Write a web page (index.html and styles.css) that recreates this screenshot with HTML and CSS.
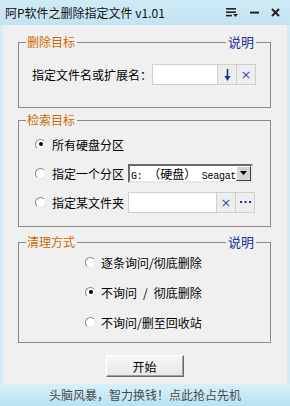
FILE: index.html
```html
<!DOCTYPE html>
<html lang="zh-CN">
<head>
  <meta charset="UTF-8">
  <title>阿P软件之删除指定文件 v1.01</title>
  <link rel="stylesheet" href="styles.css">
</head>
<body>
  <div class="window">
    <!-- 标题栏 -->
    <div class="titlebar">
      <span class="title">阿P软件之删除指定文件 v1.01</span>
      <div class="title-btns">
        <svg class="tb-icon" width="12" height="9" viewBox="0 0 12 9">
          <rect x="0" y="0" width="10" height="1.6" fill="#222"/>
          <rect x="0" y="3.4" width="10" height="1.6" fill="#222"/>
          <rect x="0" y="6.8" width="6" height="1.6" fill="#222"/>
          <path d="M7 6 L12 6 L9.5 9 Z" fill="#222"/>
        </svg>
        <svg class="tb-icon" width="9" height="9" viewBox="0 0 9 9">
          <rect x="0" y="3.6" width="9" height="2" fill="#222"/>
        </svg>
        <svg class="tb-icon" width="9" height="9" viewBox="0 0 9 9">
          <path d="M1 1 L8 8 M8 1 L1 8" stroke="#222" stroke-width="2"/>
        </svg>
      </div>
    </div>

    <div class="content">
      <!-- 删除目标 -->
      <div class="group g1">
        <div class="group-head">
          <span class="seg-l"></span>
          <span class="legend">删除目标</span>
          <span class="fill"></span>
          <span class="help">说明</span>
          <span class="seg-r"></span>
        </div>
        <div class="group-body body1">
          <div class="row">
            <span class="label">指定文件名或扩展名：</span>
            <span class="input w66"></span>
            <span class="ibtn">
              <svg width="7" height="12" viewBox="0 0 7 12">
                <path d="M3.5 0 L3.5 9" stroke="#1c2f9c" stroke-width="1.6"/>
                <path d="M0.5 7 L6.5 7 L3.5 12 Z" fill="#1c2f9c"/>
              </svg>
            </span>
            <span class="ibtn">×</span>
          </div>
        </div>
      </div>

      <!-- 检索目标 -->
      <div class="group g2">
        <div class="group-head">
          <span class="seg-l"></span>
          <span class="legend">检索目标</span>
          <span class="fill"></span>
          <span class="seg-r"></span>
        </div>
        <div class="group-body body2">
          <div class="row r20">
            <span class="radio checked"></span>
            <span class="label">所有硬盘分区</span>
          </div>
          <div class="row r20">
            <span class="radio"></span>
            <span class="label">指定一个分区</span>
            <div class="combo">
              <span class="combo-text">G: <span class="cjk">（硬盘）</span> Seagat</span>
              <span class="combo-btn">
                <svg width="7" height="4" viewBox="0 0 7 4"><path d="M0 0 L7 0 L3.5 4 Z" fill="#000"/></svg>
              </span>
            </div>
          </div>
          <div class="row r21">
            <span class="radio"></span>
            <span class="label">指定某文件夹</span>
            <span class="input w89"></span>
            <span class="ibtn">×</span>
            <span class="ibtn">
              <svg width="11" height="3" viewBox="0 0 11 3">
                <rect x="0" y="0" width="2" height="2" fill="#1c2f9c"/>
                <rect x="4.5" y="0" width="2" height="2" fill="#1c2f9c"/>
                <rect x="9" y="0" width="2" height="2" fill="#1c2f9c"/>
              </svg>
            </span>
          </div>
        </div>
      </div>

      <!-- 清理方式 -->
      <div class="group g3">
        <div class="group-head">
          <span class="seg-l"></span>
          <span class="legend">清理方式</span>
          <span class="fill"></span>
          <span class="help">说明</span>
          <span class="seg-r"></span>
        </div>
        <div class="group-body body3">
          <div class="row r20">
            <span class="radio"></span>
            <span class="label">逐条询问/彻底删除</span>
          </div>
          <div class="row r20">
            <span class="radio checked"></span>
            <span class="label">不询问&ensp;/&ensp;彻底删除</span>
          </div>
          <div class="row r20">
            <span class="radio"></span>
            <span class="label">不询问/删至回收站</span>
          </div>
        </div>
      </div>

      <div class="actions">
        <button class="start-btn">开始</button>
      </div>
    </div>

    <div class="footer">头脑风暴，智力换钱！点此抢占先机</div>
  </div>
</body>
</html>
```

FILE: styles.css
```css
body {
  margin: 0;
  padding: 0;
  font-family: "Noto Sans CJK SC", "Liberation Sans", sans-serif;
  font-size: 12px;
  color: #000;
}

.window {
  width: 290px;
  height: 406px;
  box-sizing: border-box;
  display: flex;
  flex-direction: column;
  background-color: #f0f0f0;
  border-left: 3px solid #d3edf6;
  border-right: 3px solid #d3edf6;
}

.titlebar {
  height: 25px;
  margin: 0 -3px;
  padding: 0 10px 0 5px;
  display: flex;
  align-items: center;
  justify-content: space-between;
  background: linear-gradient(#cfeaf5, #c2e4f1);
}

.title {
  font-size: 12px;
  color: #111;
}

.title-btns {
  display: flex;
  align-items: center;
  gap: 12px;
}

.tb-icon {
  display: block;
}

.content {
  padding: 10px 16px 0 15px;
}

.group-head {
  display: flex;
  height: 14px;
  line-height: 14px;
}

.seg-l {
  width: 7px;
  height: 6px;
  align-self: flex-end;
  border-top: 1px solid #8a8a8a;
  border-left: 1px solid #8a8a8a;
}

.seg-r {
  width: 14px;
  height: 6px;
  align-self: flex-end;
  border-top: 1px solid #8a8a8a;
  border-right: 1px solid #8a8a8a;
}

.fill {
  flex: 1;
  height: 6px;
  align-self: flex-end;
  border-top: 1px solid #8a8a8a;
}

.legend {
  padding: 0 2px 0 1px;
  color: #cc6a00;
}

.help {
  padding: 0 2px;
  color: #1c2f9c;
  font-size: 13px;
}

.group-body {
  border: 1px solid #8a8a8a;
  border-top: none;
}

.body1 {
  padding: 15px 0 22px 13px;
}

.g2 {
  margin-top: 5px;
}

.body2 {
  padding: 7px 0 13px 16px;
  display: flex;
  flex-direction: column;
  gap: 9px;
}

.g3 {
  margin-top: 8px;
}

.body3 {
  padding: 3px 0 10px 66px;
  display: flex;
  flex-direction: column;
  gap: 10px;
}

.row {
  display: flex;
  align-items: center;
  height: 21px;
}

.r20 {
  height: 20px;
}

.label {
  white-space: nowrap;
}

.input {
  height: 21px;
  box-sizing: border-box;
  background-color: #fff;
  border: 1px solid #cfcfcf;
}

.w66 {
  width: 66px;
}

.w89 {
  width: 89px;
  margin-left: 4px;
}

.ibtn {
  width: 20px;
  height: 21px;
  box-sizing: border-box;
  margin-left: -1px;
  border: 1px solid #cfcfcf;
  background-color: #ededed;
  color: #3a4eb8;
  font-family: "DejaVu Sans", sans-serif;
  font-size: 13px;
  display: flex;
  align-items: center;
  justify-content: center;
}

.radio {
  width: 11px;
  height: 11px;
  box-sizing: border-box;
  margin-right: 6px;
  border-radius: 50%;
  border: 1px solid;
  border-color: #8a8a8a #e8e8e8 #e8e8e8 #8a8a8a;
  background-color: #fff;
  display: flex;
  align-items: center;
  justify-content: center;
}

.radio.checked::after {
  content: "";
  width: 4px;
  height: 4px;
  border-radius: 50%;
  background-color: #000;
}

.body3 .radio {
  margin-right: 5px;
}

.combo {
  width: 125px;
  height: 19px;
  margin-left: 4px;
  box-sizing: border-box;
  display: flex;
  background-color: #fff;
  border: 2px solid;
  border-color: #6a6a6a #e8e8e8 #e8e8e8 #6a6a6a;
}

.combo-text {
  flex: 1;
  overflow: hidden;
  white-space: nowrap;
  padding-left: 1px;
  line-height: 15px;
  letter-spacing: -0.3px;
  font-family: "Liberation Mono", monospace;
  font-size: 10px;
}

.cjk {
  font-family: "Noto Sans CJK SC", sans-serif;
  font-size: 12px;
  letter-spacing: 0;
}

.combo-btn {
  width: 15px;
  box-sizing: border-box;
  background-color: #d6d3ce;
  border: 1px solid;
  border-color: #fff #404040 #404040 #fff;
  display: flex;
  align-items: center;
  justify-content: center;
}

.actions {
  display: flex;
  justify-content: center;
  padding-top: 12px;
}

.start-btn {
  width: 78px;
  height: 22px;
  padding: 0;
  font-family: "Noto Sans CJK SC", sans-serif;
  font-size: 12px;
  color: #000;
  background: linear-gradient(#f6f6f6, #e8e8e8);
  border: 1px solid;
  border-color: #fff #6a6a6a #6a6a6a #fff;
  box-shadow: inset -1px -1px 0 #a0a0a0;
}

.footer {
  margin: auto -3px 0;
  height: 22px;
  line-height: 22px;
  text-align: center;
  color: #4a4a4a;
  background: linear-gradient(#d8f0f8, #b9e2f1);
}
```
